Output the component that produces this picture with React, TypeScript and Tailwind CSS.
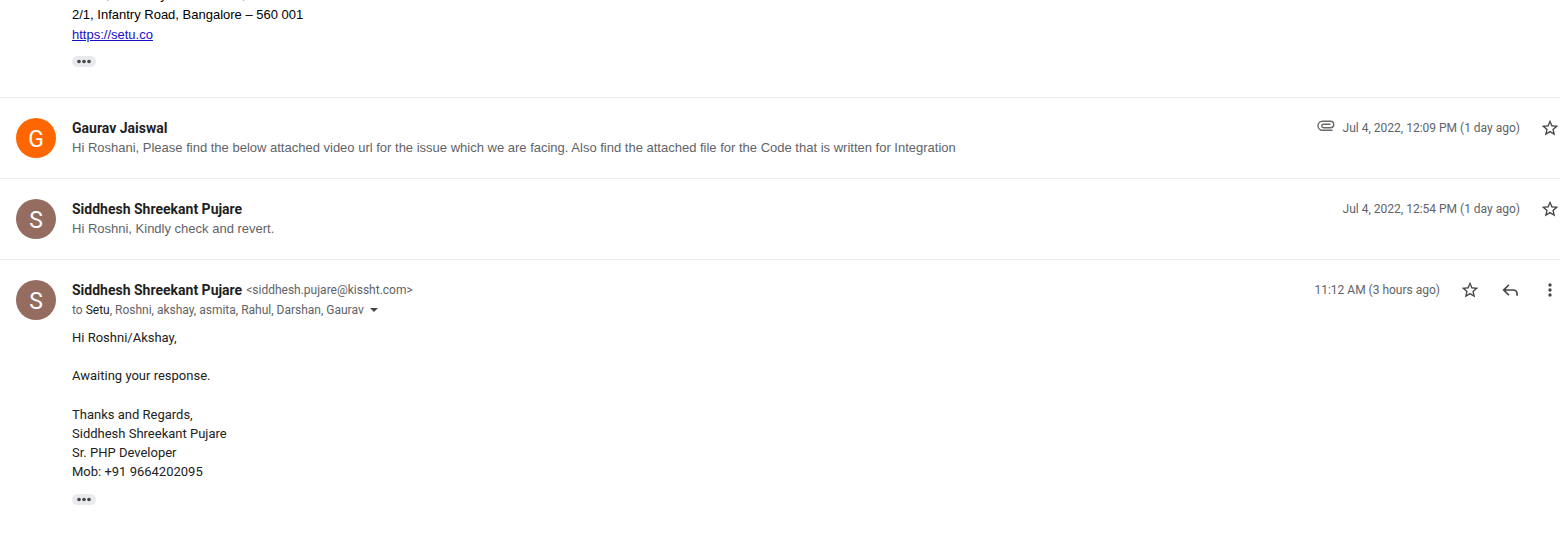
import React from "react";

function Star() {
  return (
    <button type="button" aria-label="Star" className="flex size-5 items-center justify-center">
      <svg viewBox="0 0 24 24" className="size-5" fill="#444746">
        <path d="M22 9.24l-7.19-.62L12 2 9.19 8.63 2 9.24l5.46 4.73L5.82 21 12 17.27 18.18 21l-1.63-7.03L22 9.24zM12 15.4l-3.76 2.27 1-4.28-3.32-2.88 4.38-.38L12 6.1l1.71 4.04 4.38.38-3.32 2.88 1 4.28L12 15.4z" />
      </svg>
    </button>
  );
}

function Trimmed() {
  return (
    <button type="button" aria-label="Show trimmed content" className="flex h-[11px] w-6 items-center justify-center rounded-full bg-[#e8eaed]">
      <svg viewBox="0 0 14 5" className="h-[5px] w-3.5" fill="#444746">
        <circle cx="2" cy="2.5" r="1.8" />
        <circle cx="7" cy="2.5" r="1.8" />
        <circle cx="12" cy="2.5" r="1.8" />
      </svg>
    </button>
  );
}

function Avatar({ letter, color }: { letter: string; color: string }) {
  return (
    <div className={`flex size-10 shrink-0 items-center justify-center rounded-full pt-0.5 text-[23px] leading-none text-white ${color}`}>
      {letter}
    </div>
  );
}

function Clip() {
  return (
    <svg viewBox="0 0 18 12" className="mb-1 h-3 w-[18px]" fill="none" stroke="#6b6b6b" strokeWidth="1.4">
      <path d="M15.500 10.300H5.500A4.500 4.500 0 0 1 5.500 1.300H13.500A3.200 3.200 0 0 1 13.500 7.700H6.500A1.700 1.700 0 0 1 6.500 4.300H13.500" />
    </svg>
  );
}

type RowProps = { letter: string; color: string; name: string; preview: string; date: string; clip?: boolean };

function Row({ letter, color, name, preview, date, clip }: RowProps) {
  return (
    <article className="flex h-[81px] gap-4 border-t border-[#eceded] pl-4 pt-5">
      <Avatar letter={letter} color={color} />
      <div className="min-w-0 grow">
        <h3 className="text-sm leading-5 font-bold text-[#1f1f1f]">{name}</h3>
        <p className="truncate font-['Liberation_Sans',sans-serif] text-[13px] leading-5 text-[#5f6368]">{preview}</p>
      </div>
      <div className="flex h-5 shrink-0 items-center text-xs text-[#5f6368]">
        {clip && <Clip />}
        <time className="mr-5 ml-2">{date}</time>
        <Star />
      </div>
    </article>
  );
}

export default function App() {
  return (
    <main className="overflow-hidden bg-white pr-1.5 font-[Roboto,sans-serif]">
      <section className="h-[97px] overflow-hidden pl-[72px]">
        <div className="-mt-[15px] font-['Liberation_Sans',sans-serif] text-[13px] leading-5 text-black">
          <p>Unit 3, Embassy Icon Annexe,</p>
          <p>2/1, Infantry Road, Bangalore – 560 001</p>
          <a href="https://setu.co" className="text-[#1a0dcc] underline">https://setu.co</a>
        </div>
        <div className="mt-[11px]"><Trimmed /></div>
      </section>
      <Row letter="G" color="bg-[#ff6600]" name="Gaurav Jaiswal" preview="Hi Roshani, Please find the below attached video url for the issue which we are facing. Also find the attached file for the Code that is written for Integration" date="Jul 4, 2022, 12:09 PM (1 day ago)" clip />
      <Row letter="S" color="bg-[#946c60]" name="Siddhesh Shreekant Pujare" preview="Hi Roshni, Kindly check and revert." date="Jul 4, 2022, 12:54 PM (1 day ago)" />
      <article className="flex gap-4 border-t border-[#eceded] pt-5 pl-4">
        <Avatar letter="S" color="bg-[#946c60]" />
        <div className="min-w-0 grow">
          <header className="flex justify-between">
            <div className="text-xs leading-5 text-[#5f6368]">
              <div className="flex gap-1">
                <h3 className="text-sm leading-5 font-bold text-[#1f1f1f]">Siddhesh Shreekant Pujare</h3>
                <span>&lt;siddhesh.pujare@kissht.com&gt;</span>
              </div>
              <div className="flex items-center gap-1.5">
                <p>to <span className="text-[#222]">Setu</span>, Roshni, akshay, asmita, Rahul, Darshan, Gaurav</p>
                <button type="button" aria-label="Show details">
                  <svg viewBox="0 0 8 4" className="h-1 w-2" fill="#444746"><path d="M0 0h8L4 4z" /></svg>
                </button>
              </div>
            </div>
            <div className="flex h-5 shrink-0 items-center gap-5 text-xs text-[#5f6368]">
              <time>11:12 AM (3 hours ago)</time>
              <Star />
              <button type="button" aria-label="Reply">
                <svg viewBox="0 0 24 24" className="size-5" fill="#444746"><path d="M10 5L3 12l7 7 1.400-1.400L6.800 13H16c2 0 3.500 1.500 3.500 3.500V19h2v-2.500A5.500 5.500 0 0 0 16 11H6.800l4.600-4.600z" /></svg>
              </button>
              <button type="button" aria-label="More">
                <svg viewBox="0 0 24 24" className="size-5" fill="#444746"><circle cx="12" cy="6" r="2" /><circle cx="12" cy="12" r="2" /><circle cx="12" cy="18" r="2" /></svg>
              </button>
            </div>
          </header>
          <div className="mt-2 text-[13px] leading-[19px] text-[#222]">
            <p>Hi Roshni/Akshay,</p>
            <p className="mt-[19px]">Awaiting your response.</p>
            <p className="mt-5">Thanks and Regards,</p>
            <p>Siddhesh Shreekant Pujare</p>
            <p>Sr. PHP Developer</p>
            <p>Mob: +91 9664202095</p>
          </div>
          <div className="mt-[13px]"><Trimmed /></div>
        </div>
      </article>
    </main>
  );
}
